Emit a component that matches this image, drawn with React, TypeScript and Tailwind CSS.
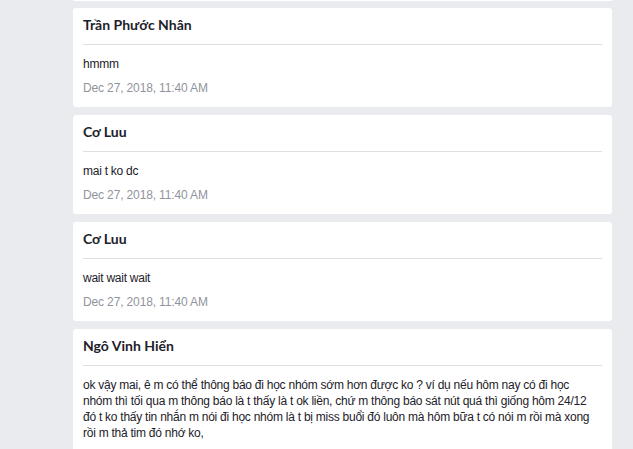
const posts = [
  { name: 'Trần Phước Nhân', body: 'hmmm', date: 'Dec 27, 2018, 11:40 AM' },
  { name: 'Cơ Luu', body: 'mai t ko dc', date: 'Dec 27, 2018, 11:40 AM' },
  { name: 'Cơ Luu', body: 'wait wait wait', date: 'Dec 27, 2018, 11:40 AM' },
  {
    name: 'Ngô Vinh Hiển',
    body: 'ok vậy mai, ê m có thể thông báo đi học nhóm sớm hơn được ko ? ví dụ nếu hôm nay có đi học nhóm thì tối qua m thông báo là t thấy là t ok liền, chứ m thông báo sát nút quá thì giống hôm 24/12 đó t ko thấy tin nhắn m nói đi học nhóm là t bị miss buổi đó luôn mà hôm bữa t có nói m rồi mà xong rồi m thả tim đó nhớ ko,',
    date: 'Dec 27, 2018, 11:40 AM',
  },
]

const Post = ({ name, body, date }: { name: string; body: string; date: string }) => (
  <div className="bg-white rounded-[3px] px-[10px] pb-[11px]">
    <div className="pt-[8px] pb-[10px] font-['Lato',sans-serif] text-[14px] leading-[18px] font-bold text-[#1d2129]">
      {name}
    </div>
    <div className="h-px bg-[#dddfe2]" />
    <div className="pt-[11px] pr-[5px] text-[12px] leading-[16px] tracking-[-0.25px] text-[#1d2129]">{body}</div>
    <div className="pt-[8px] text-[12px] leading-[16px] tracking-[-0.14px] text-[#90949c]">{date}</div>
  </div>
)

export default function App() {
  return (
    <div
      className="min-h-[449px] w-[633px] bg-[#e9ebee] pl-[73px] pr-[21px] overflow-hidden"
      style={{ fontFamily: '"Liberation Sans", Arial, sans-serif' }}
    >
      <div className="h-px bg-white rounded-b-[3px]" />
      <div className="mt-[7px] flex flex-col gap-2">
        {posts.map((p, i) => (
          <Post key={i} {...p} />
        ))}
      </div>
    </div>
  )
}
